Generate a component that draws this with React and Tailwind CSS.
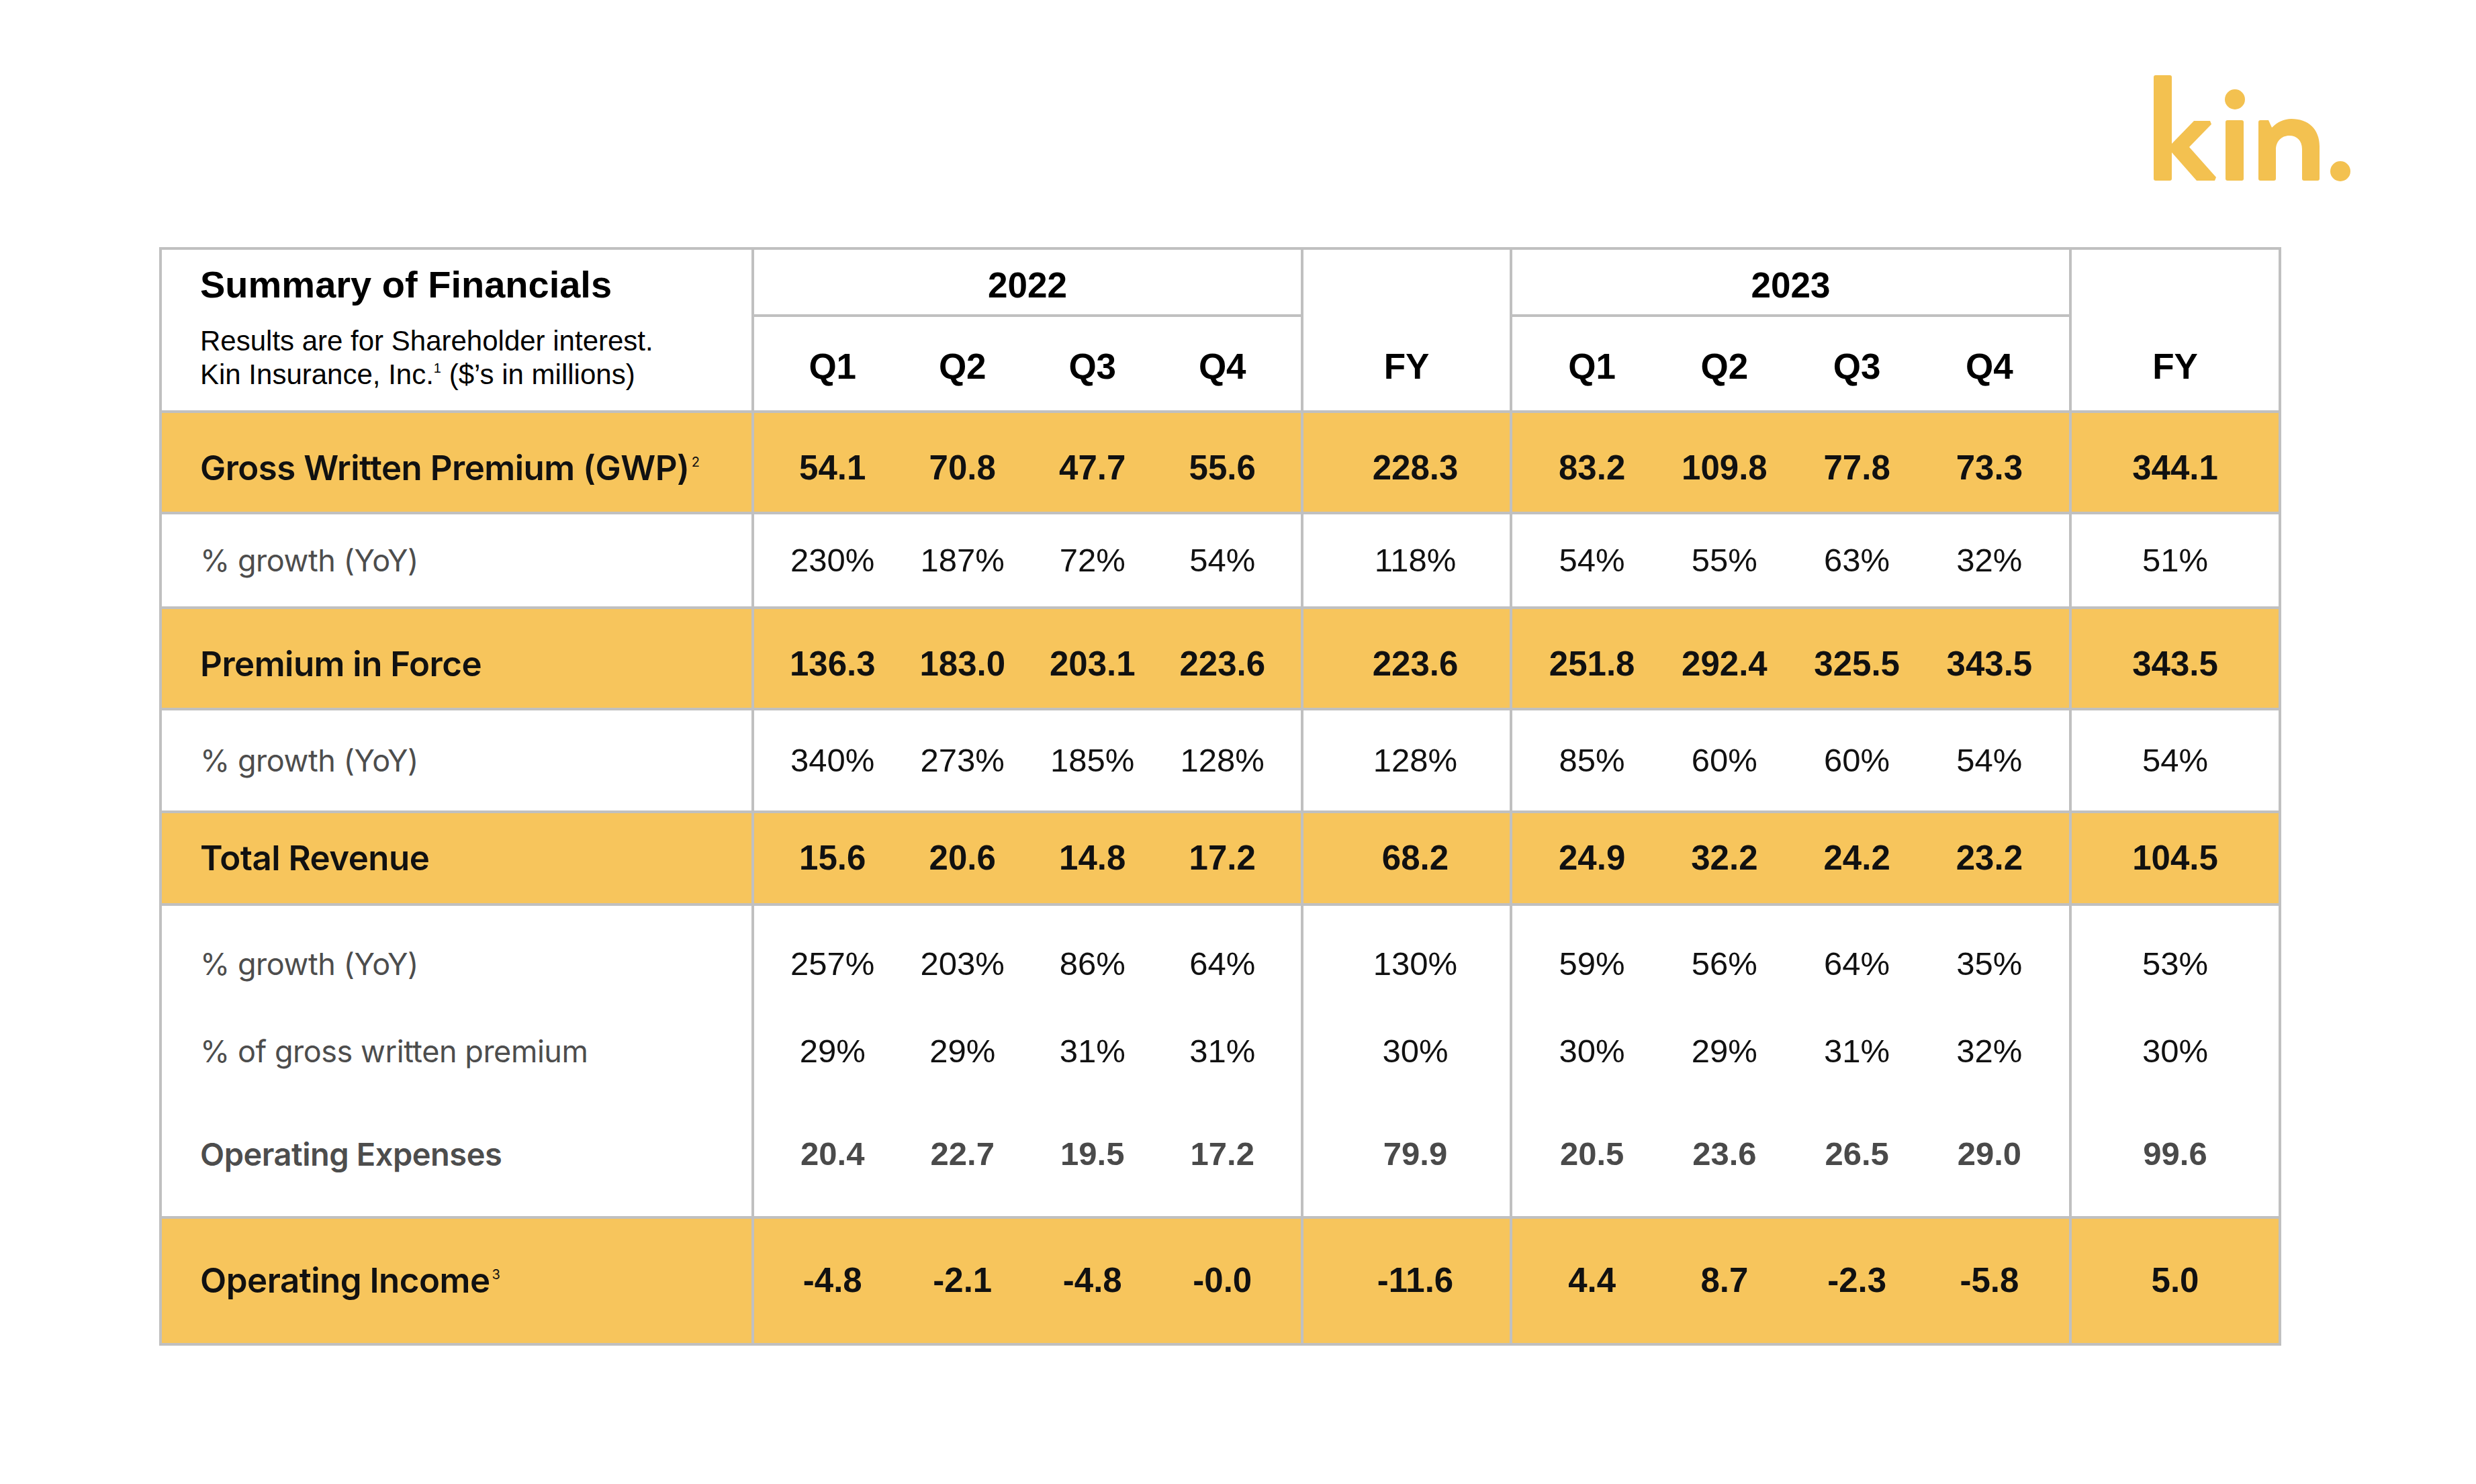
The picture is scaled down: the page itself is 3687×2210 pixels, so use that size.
import React from 'react';

const rows = [
  {
    kind: 'main', h: 'h-[151px]', slots: ['h-full pt-[18px]'],
    lines: [{ label: 'Gross Written Premium (GWP)', sup: '2', style: 'main',
      q22: ['54.1', '70.8', '47.7', '55.6'], fy22: '228.3', q23: ['83.2', '109.8', '77.8', '73.3'], fy23: '344.1' }],
  },
  {
    kind: 'plain', h: 'h-[141px]', slots: ['h-full'],
    lines: [{ label: '% growth (YoY)', style: 'pct',
      q22: ['230%', '187%', '72%', '54%'], fy22: '118%', q23: ['54%', '55%', '63%', '32%'], fy23: '51%' }],
  },
  {
    kind: 'main', h: 'h-[151px]', slots: ['h-full pt-[18px]'],
    lines: [{ label: 'Premium in Force', style: 'main',
      q22: ['136.3', '183.0', '203.1', '223.6'], fy22: '223.6', q23: ['251.8', '292.4', '325.5', '343.5'], fy23: '343.5' }],
  },
  {
    kind: 'plain', h: 'h-[153px]', slots: ['h-full'],
    lines: [{ label: '% growth (YoY)', style: 'pct',
      q22: ['340%', '273%', '185%', '128%'], fy22: '128%', q23: ['85%', '60%', '60%', '54%'], fy23: '54%' }],
  },
  {
    kind: 'main', h: 'h-[138px]', slots: ['h-full'],
    lines: [{ label: 'Total Revenue', style: 'main',
      q22: ['15.6', '20.6', '14.8', '17.2'], fy22: '68.2', q23: ['24.9', '32.2', '24.2', '23.2'], fy23: '104.5' }],
  },
  {
    kind: 'plain', h: 'h-[466px]', slots: ['mt-[37px] h-[100px]', 'mt-[30px] h-[100px]', 'mt-[53px] h-[100px]'],
    lines: [
      { label: '% growth (YoY)', style: 'pct',
        q22: ['257%', '203%', '86%', '64%'], fy22: '130%', q23: ['59%', '56%', '64%', '35%'], fy23: '53%' },
      { label: '% of gross written premium', style: 'pct',
        q22: ['29%', '29%', '31%', '31%'], fy22: '30%', q23: ['30%', '29%', '31%', '32%'], fy23: '30%' },
      { label: 'Operating Expenses', style: 'opex',
        q22: ['20.4', '22.7', '19.5', '17.2'], fy22: '79.9', q23: ['20.5', '23.6', '26.5', '29.0'], fy23: '99.6' },
    ],
  },
  {
    kind: 'main', h: 'h-[185px]', slots: ['h-full'], last: true,
    lines: [{ label: 'Operating Income', sup: '3', style: 'main',
      q22: ['-4.8', '-2.1', '-4.8', '-0.0'], fy22: '-11.6', q23: ['4.4', '8.7', '-2.3', '-5.8'], fy23: '5.0' }],
  },
];

const labelCls = {
  main: "font-['Inter',sans-serif] text-[51px] font-semibold text-[#111] tracking-[-0.01em]",
  pct: "font-['Inter',sans-serif] text-[45px] font-normal text-[#4d4d4d] tracking-[-0.01em]",
  opex: "font-['Inter',sans-serif] text-[47px] font-semibold text-[#4d4d4d] tracking-[-0.01em]",
};

const valueCls = {
  main: "font-['Liberation_Sans',Arial,sans-serif] text-[51px] font-bold text-[#111]",
  pct: "font-['Liberation_Sans',Arial,sans-serif] text-[49px] font-normal text-[#111]",
  opex: "font-['Liberation_Sans',Arial,sans-serif] text-[49px] font-bold text-[#4a4a4a]",
};

const headCls = "font-['Liberation_Sans',Arial,sans-serif] font-bold text-[53px] leading-none text-black";

function KinLogo() {
  return (
    <svg width="400" height="220" viewBox="0 0 400 220" className="ml-[3150px] block" fill="#f3c150">
      <rect x="57" y="32" width="27" height="157" rx="3" />
      <path d="M84 134 L117 100 L141 100 L143 105 L110 139 L150 184 L148 189 L121 189 L84 147 Z" />
      <circle cx="178" cy="68" r="15" />
      <rect x="164" y="99" width="27" height="90" rx="3" />
      <path d="M213 102 Q213 99 216 99 L228 99 L233 110 C241 102 251 97 262 97 C287 97 304 112 304 138 L304 186 Q304 189 301 189 L281 189 Q278 189 278 186 L278 142 C278 129 270 122 259 122 C247 122 239 131 239 143 L239 186 Q239 189 236 189 L216 189 Q213 189 213 186 Z" />
      <circle cx="335" cy="175" r="15" />
    </svg>
  );
}

function Row({ row }) {
  const bg = row.kind === 'main' ? 'bg-[#f7c55c]' : 'bg-white';
  const border = row.last ? '' : 'border-b-4 border-[#c0c0c0]';
  const col = (key, vals, extra = '') => (
    <div key={key} className="flex-1 flex flex-col">
      {row.lines.map((l, i) => (
        <div key={i} className={`${row.slots[i]} flex items-center justify-center ${extra} ${valueCls[l.style]}`}>
          {vals(l)}
        </div>
      ))}
    </div>
  );
  return (
    <div className={`flex ${row.h} ${bg} ${border}`}>
      <div className="w-[882px] border-r-4 border-[#c0c0c0] pl-[57px] flex flex-col">
        {row.lines.map((l, i) => (
          <div key={i} className={`${row.slots[i]} flex items-center ${labelCls[l.style]}`}>
            <span>
              {l.label}
              {l.sup && <sup className="text-[20px] font-normal -top-[20px] ml-[3px]">{l.sup}</sup>}
            </span>
          </div>
        ))}
      </div>
      <div className="w-[818px] border-r-4 border-[#c0c0c0] px-[20px] flex">
        {[0, 1, 2, 3].map(q => col(q, l => l.q22[q]))}
      </div>
      <div className="w-[311px] border-r-4 border-[#c0c0c0] flex">
        {col('fy', l => l.fy22, 'pl-[26px]')}
      </div>
      <div className="w-[833px] border-r-4 border-[#c0c0c0] px-[20px] flex">
        {[0, 1, 2, 3].map(q => col(q, l => l.q23[q]))}
      </div>
      <div className="flex-1 flex">
        {col('fy', l => l.fy23)}
      </div>
    </div>
  );
}

function YearGroup({ year, width }) {
  return (
    <div className={`${width} border-r-4 border-[#c0c0c0] flex flex-col`}>
      <div className={`h-[100px] border-b-4 border-[#c0c0c0] flex items-center justify-center pt-[8px] ${headCls}`}>
        {year}
      </div>
      <div className="h-[139px] px-[20px] flex pt-[8px]">
        {['Q1', 'Q2', 'Q3', 'Q4'].map(q => (
          <div key={q} className={`flex-1 flex items-center justify-center ${headCls}`}>{q}</div>
        ))}
      </div>
    </div>
  );
}

export default function App() {
  return (
    <div className="w-[3687px] h-[2210px] bg-white pt-[80px] overflow-hidden">
      <KinLogo />
      <div className="ml-[237px] mt-[68px] w-[3160px] border-4 border-[#c0c0c0]">
        <div className="flex h-[243px] border-b-4 border-[#c0c0c0]">
          <div className="w-[882px] border-r-4 border-[#c0c0c0] pl-[57px] pt-[24px]">
            <div className="font-['Liberation_Sans',Arial,sans-serif] font-bold text-[56px] leading-none text-black">
              Summary of Financials
            </div>
            <div className="mt-[31px] font-['Liberation_Sans',Arial,sans-serif] text-[42px] leading-[50px] text-black">
              <div>Results are for Shareholder interest.</div>
              <div>
                Kin Insurance, Inc.<sup className="text-[20px] -top-[17px]">1</sup> ($’s in millions)
              </div>
            </div>
          </div>
          <YearGroup year="2022" width="w-[818px]" />
          <div className="w-[311px] border-r-4 border-[#c0c0c0] flex flex-col">
            <div className="h-[100px]" />
            <div className={`h-[139px] flex items-center justify-center pt-[8px] ${headCls}`}>FY</div>
          </div>
          <YearGroup year="2023" width="w-[833px]" />
          <div className="flex-1 flex flex-col">
            <div className="h-[100px]" />
            <div className={`h-[139px] flex items-center justify-center pt-[8px] ${headCls}`}>FY</div>
          </div>
        </div>
        {rows.map((r, i) => <Row key={i} row={r} />)}
      </div>
    </div>
  );
}
